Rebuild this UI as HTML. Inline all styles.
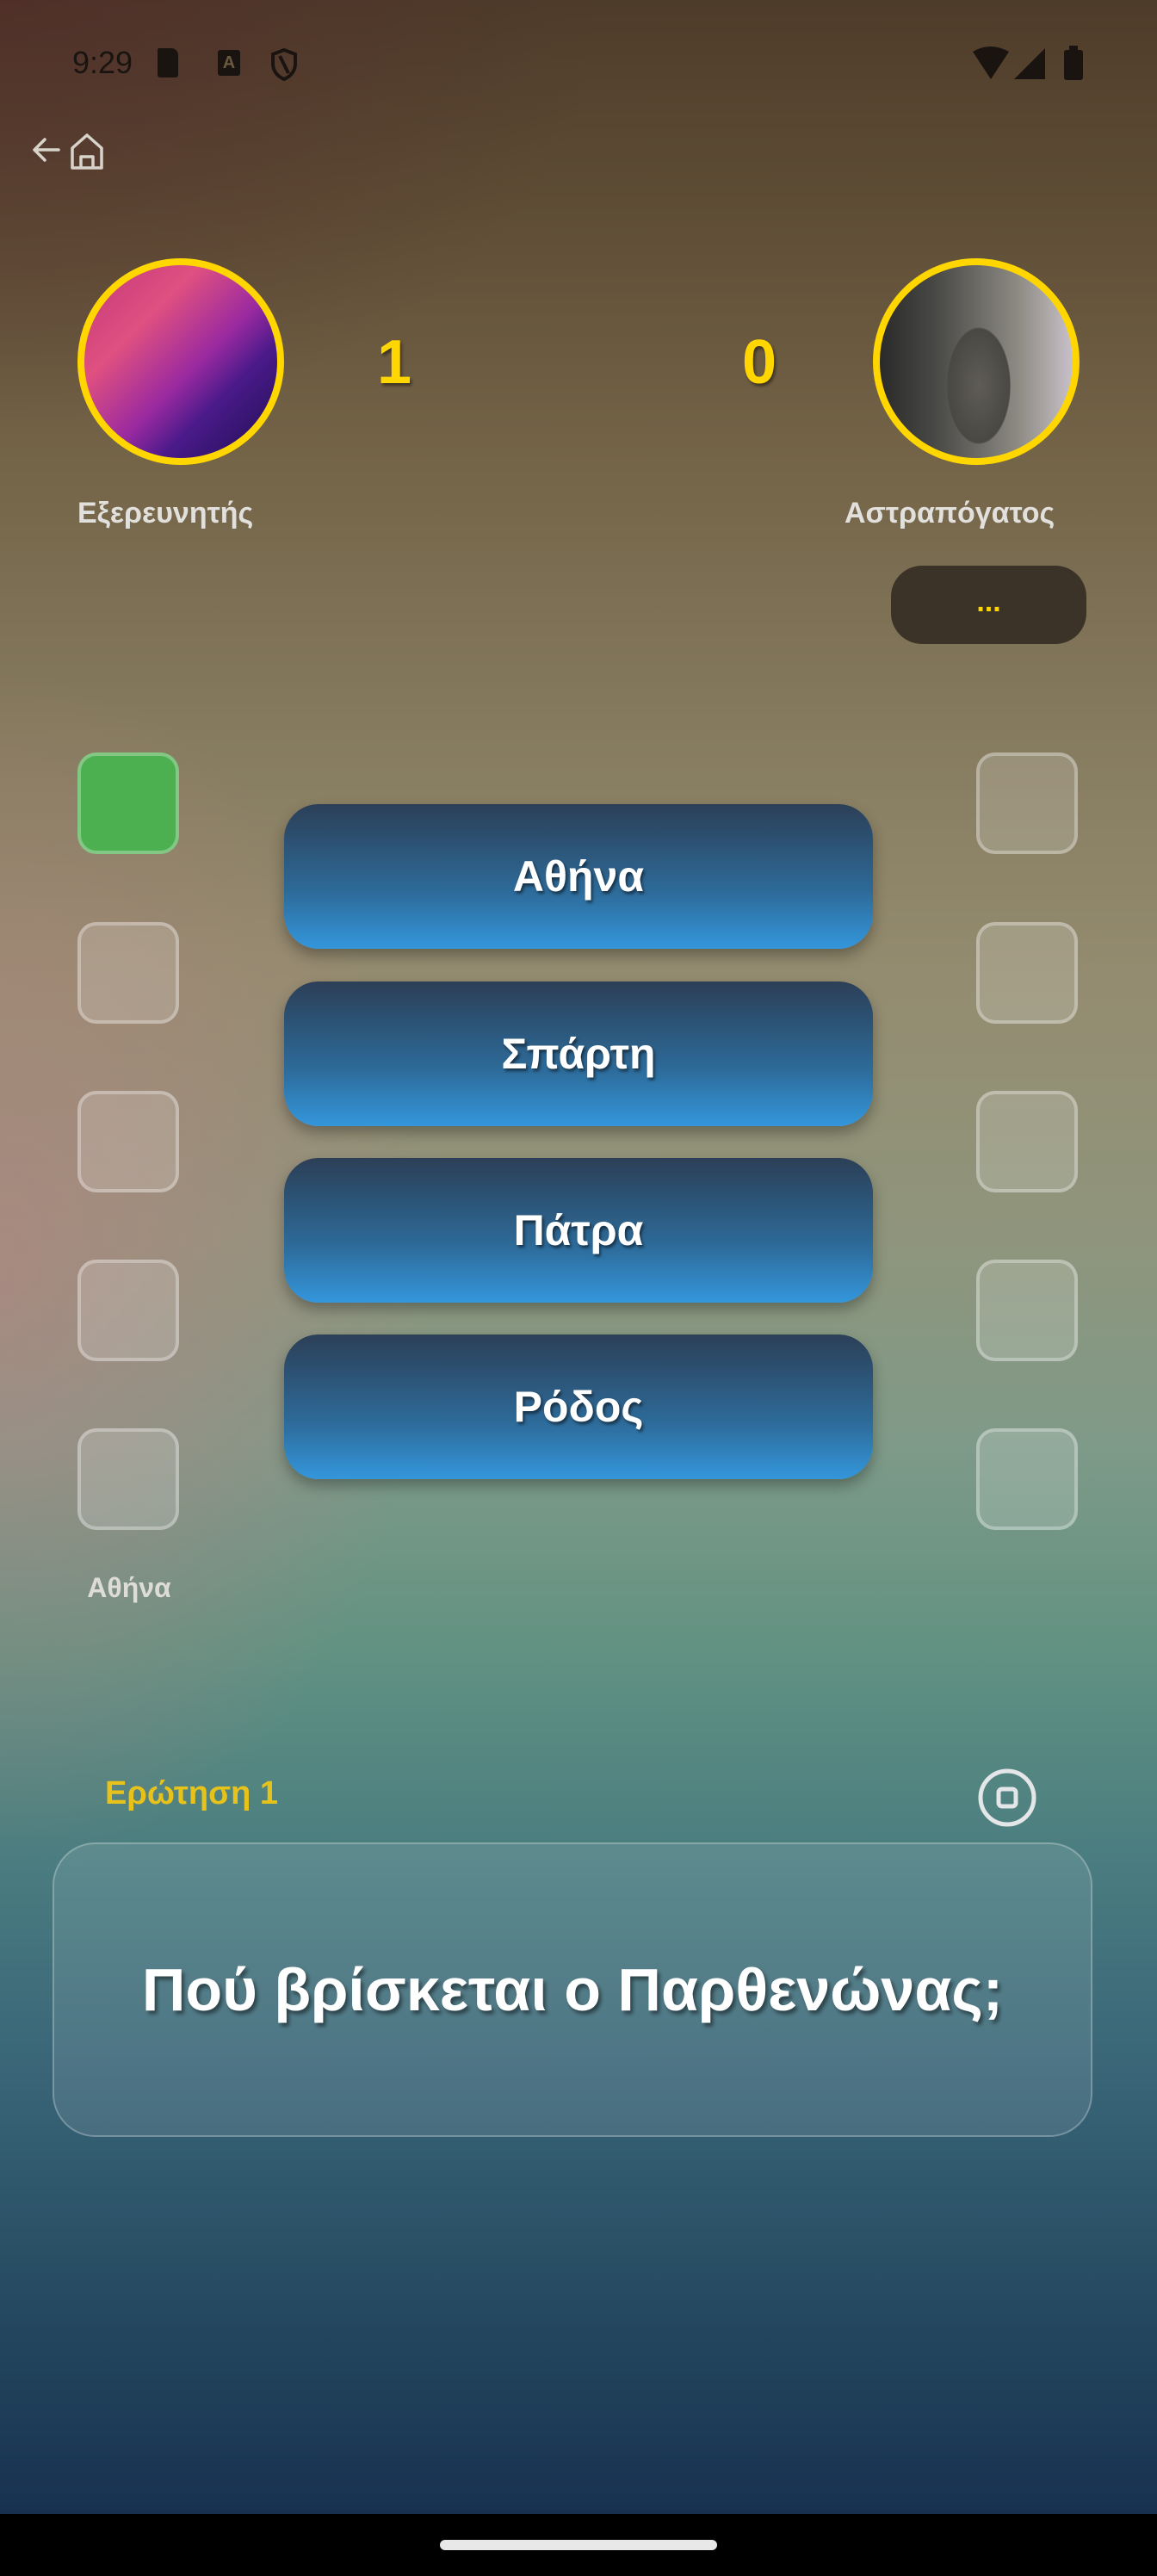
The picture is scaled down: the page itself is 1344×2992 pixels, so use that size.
<!DOCTYPE html>
<html><head><meta charset="utf-8">
<style>
*{margin:0;padding:0;box-sizing:border-box}
body{width:1344px;height:2992px;position:relative;overflow:hidden;font-family:"Liberation Sans","Noto Sans CJK SC",sans-serif;
background:
radial-gradient(ellipse 500px 700px at 0px 1480px, rgba(185,130,130,0.6), rgba(185,130,130,0) 100%),
radial-gradient(ellipse 700px 500px at 0px 0px, rgba(80,40,40,0.6), rgba(80,40,40,0) 100%),
linear-gradient(180deg,#4e3c2a 0%,#5e4d35 8%,#746448 18%,#857a5e 28%,#948c70 38%,#8f957c 48%,#7f9a88 56%,#629282 64%,#4a7d80 72%,#3a6678 80%,#24485f 90%,#172f4f 98%);}
.abs{position:absolute}
.status{color:#1a1410;font-size:36px;left:84px;top:52px}
.av{width:240px;height:240px;border-radius:50%;border:8px solid #ffd600;top:300px;overflow:hidden}
.score{color:#ffd600;font-weight:bold;font-size:72px;top:380px;text-shadow:2px 3px 3px rgba(0,0,0,.45)}
.name{color:#e2e0dc;font-weight:bold;font-size:34px;top:577px}
.box{width:118px;height:118px;border-radius:22px;border:4px solid rgba(255,255,255,.3);background:rgba(255,255,255,.16)}
.btn{left:330px;width:684px;height:168px;border-radius:40px;background:linear-gradient(180deg,#2c3f57 0%,#2d6a98 60%,#3496db 100%);box-shadow:0 8px 16px rgba(0,0,0,.3);color:#fff;font-size:50px;font-weight:bold;display:flex;align-items:center;justify-content:center;text-shadow:2px 3px 3px rgba(0,0,0,.5)}
</style></head><body>
<div class="abs status">9:29</div>
<div class="abs" style="left:183px;top:56px;width:24px;height:34px;background:#1a1410;border-radius:2px 8px 3px 3px"></div>
<div class="abs" style="left:253px;top:58px;width:26px;height:30px;background:#1a1410;border-radius:3px;color:#6a5a40;font-size:20px;font-weight:bold;text-align:center;line-height:30px">A</div>
<svg class="abs" style="left:313px;top:55px" width="34" height="40" viewBox="0 0 34 40"><path d="M17 3 L30 8 V19 C30 28 24 34 17 37 C10 34 4 28 4 19 V8 Z" fill="none" stroke="#1a1410" stroke-width="4"/><path d="M12 10 L22 30" stroke="#1a1410" stroke-width="4"/></svg>
<svg class="abs" style="left:1128px;top:52px" width="140" height="42" viewBox="0 0 140 42"><path d="M2 8 Q22 -4 44 8 L23 40 Z" fill="#1a1410"/><path d="M50 40 L86 4 V40 Z" fill="#1a1410"/><rect x="108" y="6" width="22" height="35" rx="3" fill="#1a1410"/><rect x="114" y="1" width="10" height="6" fill="#1a1410"/></svg>
<svg class="abs" style="left:34px;top:152px" width="96" height="46" viewBox="0 0 96 46"><path d="M34 22 H6 M18 10 L6 22 L18 34" fill="none" stroke="#d8d4cc" stroke-width="3.5" stroke-linecap="round" stroke-linejoin="round"/><path d="M50 43 V20 L67 5 L84 20 V43 Z M60 43 V30 H74 V43" fill="none" stroke="#d8d4cc" stroke-width="3.5" stroke-linejoin="round"/></svg>

<div class="abs av" style="left:90px;background:linear-gradient(135deg,#c0387a 0%,#e05080 30%,#9a2aa0 55%,#4a1a8a 70%,#1e0f50 100%)"></div>
<div class="abs av" style="left:1014px;background:radial-gradient(ellipse 60px 110px at 115px 140px,#5e5c55,#4a4843 60%,transparent 62%),linear-gradient(90deg,#2a2a2a 0%,#4a4a48 30%,#8a8880 70%,#c8c0c8 100%)"></div>
<div class="abs score" style="left:438px">1</div>
<div class="abs score" style="left:862px">0</div>
<div class="abs name" style="left:90px">Εξερευνητής</div>
<div class="abs name" style="left:981px">Αστραπόγατος</div>
<div class="abs" style="left:1035px;top:657px;width:227px;height:91px;border-radius:36px;background:#3b3228;color:#ffd600;font-size:34px;font-weight:bold;text-align:center;line-height:84px">...</div>

<div class="abs box" style="left:90px;top:874px;background:#4caf50;border-color:rgba(255,255,255,.3)"></div>
<div class="abs box" style="left:90px;top:1071px"></div>
<div class="abs box" style="left:90px;top:1267px"></div>
<div class="abs box" style="left:90px;top:1463px"></div>
<div class="abs box" style="left:90px;top:1659px"></div>
<div class="abs box" style="left:1134px;top:874px"></div>
<div class="abs box" style="left:1134px;top:1071px"></div>
<div class="abs box" style="left:1134px;top:1267px"></div>
<div class="abs box" style="left:1134px;top:1463px"></div>
<div class="abs box" style="left:1134px;top:1659px"></div>
<div class="abs" style="left:60px;width:180px;text-align:center;top:1826px;color:#dedcd8;font-weight:bold;font-size:32px">Αθήνα</div>

<div class="abs btn" style="top:934px">Αθήνα</div>
<div class="abs btn" style="top:1140px">Σπάρτη</div>
<div class="abs btn" style="top:1345px">Πάτρα</div>
<div class="abs btn" style="top:1550px">Ρόδος</div>

<div class="abs" style="left:122px;top:2062px;color:#e6c21a;font-size:38px;font-weight:bold">Ερώτηση 1</div>
<svg class="abs" style="left:1135px;top:2053px" width="70" height="70" viewBox="0 0 70 70"><circle cx="35" cy="35" r="31" fill="none" stroke="#e4e6e8" stroke-width="5"/><rect x="25" y="25" width="20" height="20" rx="4" fill="none" stroke="#e4e6e8" stroke-width="5"/></svg>
<div class="abs" style="left:61px;top:2140px;width:1208px;height:342px;border-radius:50px;border:2px solid rgba(255,255,255,.25);background:rgba(255,255,255,.1);display:flex;align-items:center;justify-content:center;color:#fff;font-weight:bold;font-size:70px;text-shadow:3px 4px 4px rgba(0,0,0,.45)">Πού βρίσκεται ο Παρθενώνας;</div>

<div class="abs" style="left:0;top:2920px;width:1344px;height:72px;background:#000"></div>
<div class="abs" style="left:511px;top:2950px;width:322px;height:12px;border-radius:6px;background:#e8e8e8"></div>
</body></html>
